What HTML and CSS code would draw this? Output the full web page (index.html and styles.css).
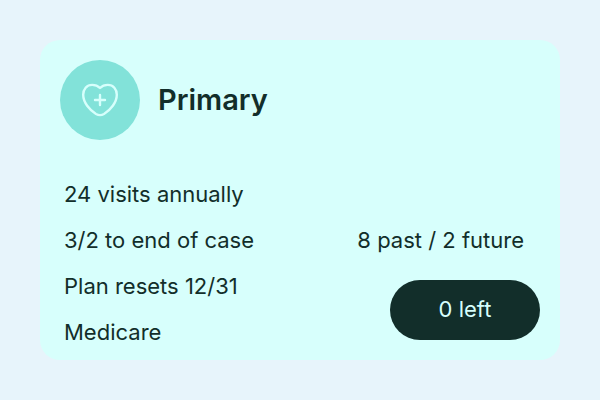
FILE: index.html
```html
<!DOCTYPE html>
<html lang="en">
<head>
    <meta charset="UTF-8">
    <meta name="viewport" content="width=device-width, initial-scale=1.0">
    <title>Primary</title>
    <link rel="stylesheet" href="styles.css">
</head>
<body>
    <section class="card">
        <div class="card-header">
            <div class="icon">
                <svg viewBox="0 0 40 40" width="40" height="40" aria-hidden="true">
                    <path d="M20 8C17.800 5.800 15 4.900 12.200 4.900C6.700 4.900 3.200 9 3.200 14.800C3.200 22.500 9.500 30 16 34C18.800 35.600 21.200 35.600 24 34C30.500 30 36.800 22.500 36.800 14.800C36.800 9 33.300 4.900 27.800 4.900C25 4.900 22.200 5.800 20 8Z"/>
                    <path d="M20 15V25M15 20H25"/>
                </svg>
            </div>
            <h1>Primary</h1>
        </div>
        <div class="card-body">
            <ul class="details">
                <li>24 visits annually</li>
                <li>3/2 to end of case</li>
                <li>Plan resets 12/31</li>
                <li>Medicare</li>
            </ul>
            <div class="usage">
                <p>8 past / 2 future</p>
                <button type="button">0 left</button>
            </div>
        </div>
    </section>
</body>
</html>
```
FILE: styles.css
```css
* {
    box-sizing: border-box;
}
body {
    margin: 0;
    padding: 40px;
    background-color: #e7f4fb;
    color: #122e2a;
    font-family: Inter, "Liberation Sans", sans-serif;
    font-size: 22px;
    line-height: 46px;
}
.card {
    padding: 20px;
    padding-bottom: 0;
    border-radius: 20px;
    background-color: #d7fffc;
}
.card-header {
    display: flex;
    align-items: center;
    gap: 18px;
}
.icon {
    display: flex;
    align-items: center;
    justify-content: center;
    width: 80px;
    height: 80px;
    border-radius: 50%;
    background-color: #82e2d9;
}
.icon svg {
    fill: none;
    stroke: #d7fffc;
    stroke-width: 2.4;
    stroke-linecap: round;
    stroke-linejoin: round;
}
h1 {
    margin: 0;
    font-size: 29px;
    font-weight: 600;
}
.card-body {
    display: flex;
    justify-content: space-between;
    padding-top: 31px;
}
.details {
    margin: 0;
    padding: 0 4px 5px;
    list-style: none;
}
.usage {
    display: flex;
    flex-direction: column;
    align-items: flex-end;
    justify-content: flex-end;
    padding-bottom: 20px;
}
.usage p {
    margin: 0 0 17px;
    padding-right: 16px;
}
button {
    width: 150px;
    height: 60px;
    padding: 0 0 2px;
    border: 0;
    border-radius: 30px;
    background-color: #122e2a;
    color: #d7fffc;
    font: inherit;
    cursor: pointer;
}
```
